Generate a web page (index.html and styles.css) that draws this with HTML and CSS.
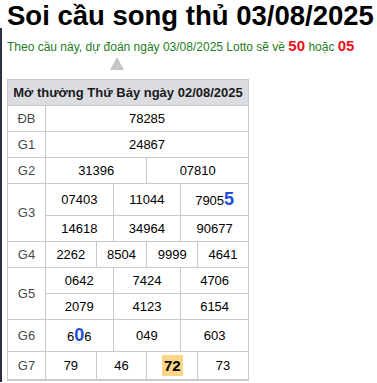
FILE: index.html
```html
<!DOCTYPE html>
<html lang="vi">
<head>
<meta charset="utf-8">
<title>Soi cầu song thủ 03/08/2025</title>
<link rel="stylesheet" href="styles.css">
</head>
<body>
<h1 class="title">Soi cầu song thủ 03/08/2025</h1>
<div class="content">
  <p class="predict">Theo cầu này, dự đoán ngày 03/08/2025 Lotto sẽ về <b class="hot">50</b> hoặc <b class="hot">05</b></p>
  <div class="arrow-row"><span class="arrow"></span></div>
  <table class="kq">
    <colgroup>
      <col class="c-lbl">
      <col span="12" class="c-num">
    </colgroup>
    <thead>
      <tr><th colspan="13">Mở thưởng Thứ Bảy ngày 02/08/2025</th></tr>
    </thead>
    <tbody>
      <tr><td class="lbl">ĐB</td><td colspan="12">78285</td></tr>
      <tr><td class="lbl">G1</td><td colspan="12">24867</td></tr>
      <tr><td class="lbl">G2</td><td colspan="6">31396</td><td colspan="6">07810</td></tr>
      <tr><td class="lbl" rowspan="2">G3</td><td colspan="4">07403</td><td colspan="4">11044</td><td colspan="4">7905<b class="mark">5</b></td></tr>
      <tr><td colspan="4">14618</td><td colspan="4">34964</td><td colspan="4">90677</td></tr>
      <tr><td class="lbl">G4</td><td colspan="3">2262</td><td colspan="3">8504</td><td colspan="3">9999</td><td colspan="3">4641</td></tr>
      <tr><td class="lbl" rowspan="2">G5</td><td colspan="4">0642</td><td colspan="4">7424</td><td colspan="4">4706</td></tr>
      <tr><td colspan="4">2079</td><td colspan="4">4123</td><td colspan="4">6154</td></tr>
      <tr><td class="lbl">G6</td><td colspan="4">6<b class="mark">0</b>6</td><td colspan="4">049</td><td colspan="4">603</td></tr>
      <tr><td class="lbl">G7</td><td colspan="3">79</td><td colspan="3">46</td><td colspan="3"><b class="hit">72</b></td><td colspan="3">73</td></tr>
    </tbody>
  </table>
</div>
</body>
</html>
```

FILE: styles.css
```css
html, body {
  margin: 0;
  padding: 0;
  background: #fff;
}
body {
  font-family: "Liberation Sans", Arial, sans-serif;
  color: #000;
}
.title {
  margin: 0;
  padding: 2px 0 0 7px;
  font-size: 27.5px;
  line-height: 28px;
  font-weight: bold;
  white-space: nowrap;
  height: 28px;
  box-sizing: border-box;
}
.content {
  border-left: 2px solid #2b3042;
  padding-left: 5px;
  padding-bottom: 1px;
}
.predict {
  margin: 0;
  padding-top: 9px;
  font-size: 12px;
  line-height: 17px;
  color: #1e7d1e;
  white-space: nowrap;
}
.hot {
  color: #e8101a;
  font-size: 15px;
}
.arrow-row {
  height: 23px;
  padding-top: 1px;
  box-sizing: border-box;
  padding-left: 103px;
}
.arrow {
  display: block;
  width: 0;
  height: 0;
  border-left: 7px solid transparent;
  border-right: 7px solid transparent;
  border-bottom: 13px solid #c6c6c6;
}
.kq {
  border-collapse: collapse;
  width: 242px;
  table-layout: fixed;
  font-size: 13px;
  border-bottom: 2px solid #c9c9c9;
}
.c-lbl {
  width: 38px;
}
.kq th {
  background: #dcdde2;
  border: 1px solid #c9c9c9;
  font-weight: bold;
  color: #1a1a1a;
  padding: 5px 0;
  line-height: 15px;
  white-space: nowrap;
  text-align: center;
}
.kq td {
  border: 1px solid #c9c9c9;
  padding: 5px 0;
  text-align: center;
  line-height: normal;
}
.kq td.lbl {
  color: #4a4a4a;
}
.mark {
  color: #1d4fd8;
  font-size: 18px;
}
.hit {
  background: #fbd687;
  font-size: 15px;
  padding: 2px 2px;
}
```
